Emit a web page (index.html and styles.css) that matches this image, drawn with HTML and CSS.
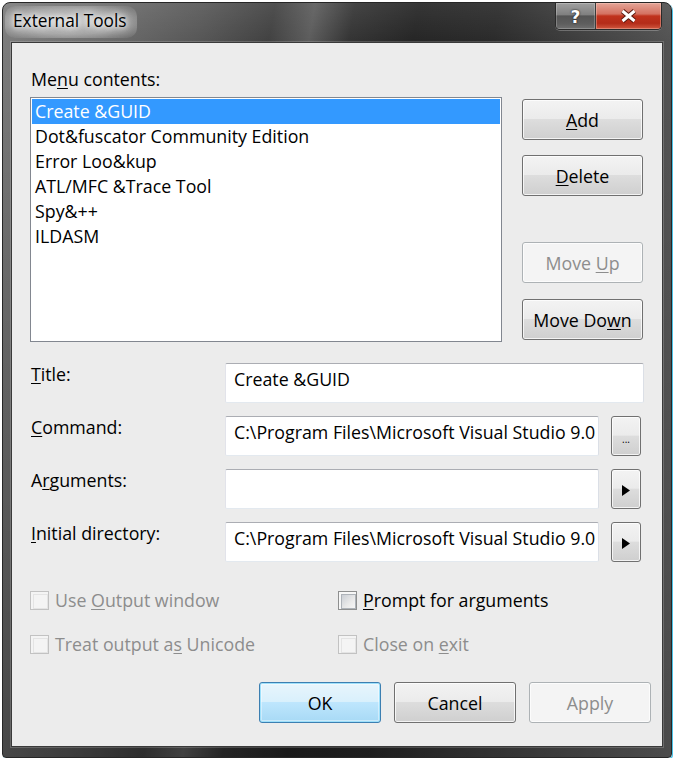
FILE: index.html
```html
<!DOCTYPE html>
<html>
<head>
<meta charset="utf-8">
<link rel="stylesheet" href="styles.css">
</head>
<body>
<div class="window">
  <div class="titlebar">
    <span class="title">External Tools</span>
    <div class="caption-btns">
      <div class="cbtn help"><span class="q">?</span></div>
      <div class="cbtn close">
        <svg width="17" height="14" viewBox="0 0 17 14">
          <path d="M2.5 2 L14.5 12 M14.5 2 L2.5 12" stroke="#5a1a10" stroke-width="5" fill="none"/>
          <path d="M2.5 2 L14.5 12 M14.5 2 L2.5 12" stroke="#ffffff" stroke-width="3" fill="none"/>
        </svg>
      </div>
    </div>
  </div>
  <div class="client">
    <div class="menu-lbl">Me<u>n</u>u contents:</div>
    <div class="top">
      <div class="list">
        <div class="item sel">Create &amp;GUID</div>
        <div class="item">Dot&amp;fuscator Community Edition</div>
        <div class="item">Error Loo&amp;kup</div>
        <div class="item">ATL/MFC &amp;Trace Tool</div>
        <div class="item">Spy&amp;++</div>
        <div class="item">ILDASM</div>
      </div>
      <div class="side">
        <div class="btn add"><span><u>A</u>dd</span></div>
        <div class="btn del"><span><u>D</u>elete</span></div>
        <div class="btn dis up"><span>Move <u>U</u>p</span></div>
        <div class="btn down"><span>Move Do<u>w</u>n</span></div>
      </div>
    </div>
    <div class="fields">
      <div class="flabel"><u>T</u>itle:</div>
      <div class="field wide">Create &amp;GUID</div>

      <div class="flabel"><u>C</u>ommand:</div>
      <div class="field">C:\Program Files\Microsoft Visual Studio 9.0</div>
      <div class="btn small dots"><span>...</span></div>

      <div class="flabel">A<u>r</u>guments:</div>
      <div class="field"></div>
      <div class="btn small"><svg width="8" height="11" viewBox="0 0 8 11"><polygon points="0,0 8,5.5 0,11" fill="#000"/></svg></div>

      <div class="flabel"><u>I</u>nitial directory:</div>
      <div class="field">C:\Program Files\Microsoft Visual Studio 9.0</div>
      <div class="btn small"><svg width="8" height="11" viewBox="0 0 8 11"><polygon points="0,0 8,5.5 0,11" fill="#000"/></svg></div>
    </div>
    <div class="checks">
      <div class="check disabled"><span class="box"></span><span>Use <u>O</u>utput window</span></div>
      <div class="check"><span class="box"></span><span><u>P</u>rompt for arguments</span></div>
      <div class="check disabled"><span class="box"></span><span>Treat output a<u>s</u> Unicode</span></div>
      <div class="check disabled"><span class="box"></span><span>Close on <u>e</u>xit</span></div>
    </div>
    <div class="actions">
      <div class="btn big default"><span>OK</span></div>
      <div class="btn big"><span>Cancel</span></div>
      <div class="btn big dis"><span>Apply</span></div>
    </div>
  </div>
</div>
</body>
</html>
```
FILE: styles.css
```css
* { box-sizing: border-box; }
body {
  margin: 0;
  background: #ffffff;
  font-family: "Open Sans", "Noto Sans", sans-serif;
  font-size: 17.8px;
  color: #000;
}
u { text-decoration-thickness: 1px; text-underline-offset: 2px; }

.window {
  margin: 2px 0 0 2px;
  width: 670px;
  height: 756px;
  border: 1px solid #262626;
  border-radius: 8px 8px 4px 4px;
  padding: 0 8px 10px;
  display: flex;
  flex-direction: column;
  box-shadow: 1px 1px 0 #4cc3e8;
  background:
    linear-gradient(to bottom, rgba(255,255,255,0.08) 0, rgba(0,0,0,0) 40px, rgba(0,0,0,0.3) 100%),
    linear-gradient(100deg, #7c7c7c 0%, #6e6e6e 12%, #575757 25%, #414141 34%, #5c5c5c 39%, #343434 44%, #252525 52%, #2a2a2a 62%, #3d3d3d 72%, #545454 85%, #6c6c6c 100%);
}

.titlebar {
  height: 39px;
  display: flex;
  align-items: flex-start;
  justify-content: space-between;
}
.title {
  margin: 3px 0 0 -6px;
  padding: 4px 10px 6px 8px;
  line-height: 22px;
  font-size: 17.3px;
  color: #000;
  border-radius: 10px;
  background: radial-gradient(ellipse at center, rgba(255,255,255,0.55) 0%, rgba(255,255,255,0.35) 55%, rgba(255,255,255,0) 100%);
  text-shadow: 0 0 5px #fff, 0 0 9px #fff, 0 0 14px rgba(255,255,255,0.9);
}
.caption-btns {
  display: flex;
  margin-right: 1px;
  height: 27px;
  border: 1px solid #2a2a2a;
  border-top: none;
  border-radius: 0 0 5px 5px;
  overflow: hidden;
  box-shadow: 0 1px 0 rgba(255,255,255,0.25);
}
.cbtn {
  display: flex;
  align-items: center;
  justify-content: center;
}
.cbtn.help {
  width: 40px;
  border-right: 1px solid #3a3a3a;
  background: linear-gradient(#a0a0a0 0%, #808080 45%, #555555 50%, #5e5e5e 80%, #707070 100%);
  box-shadow: inset 0 0 0 1px rgba(255,255,255,0.22);
}
.cbtn.help .q {
  font-family: "DejaVu Sans", sans-serif;
  font-weight: bold;
  font-size: 17px;
  color: #fff;
  text-shadow: 0 0 1px #222, 0 0 2px #222;
  margin-top: 1px;
}
.cbtn.close {
  width: 65px;
  background: linear-gradient(#e4a497 0%, #d47261 42%, #c0331d 50%, #b42c19 78%, #d0583f 100%);
  box-shadow: inset 0 0 0 1px rgba(255,220,210,0.35);
}

.client {
  flex: 1;
  background: #ececec;
  border: 1px solid #3a3a3a;
  box-shadow: 0 0 0 1px rgba(255,255,255,0.18);
  padding: 25px 11px 0 18px;
  display: flex;
  flex-direction: column;
}
.menu-lbl { margin-left: 1px; line-height: 22px; }

.top { display: flex; gap: 20px; margin-top: 7px; }
.list {
  width: 472px;
  height: 245px;
  border: 1px solid #828790;
  background: #fff;
  padding: 1px;
}
.item {
  height: 25px;
  line-height: 25px;
  padding-left: 3px;
  white-space: nowrap;
}
.item.sel { background: #3399ff; color: #fff; }

.side {
  width: 121px;
  display: flex;
  flex-direction: column;
  padding-top: 2px;
}
.btn {
  height: 41px;
  display: flex;
  align-items: center;
  justify-content: center;
  border: 1px solid #707070;
  border-radius: 3px;
  background: linear-gradient(#f3f3f3 0%, #ebebeb 48%, #dddddd 50%, #cfcfcf 100%);
  box-shadow: inset 0 0 0 1px rgba(255,255,255,0.75);
  color: #000;
  line-height: 22px;
}
.btn.dis {
  border-color: #adb2b5;
  background: #f4f4f4;
  color: #8d8d8d;
}
.del { margin-top: 15px; }
.up { margin-top: 46px; }
.down { margin-top: 16px; }

.fields {
  display: grid;
  grid-template-columns: 183px 374px 30px;
  grid-auto-rows: 40px;
  column-gap: 12px;
  row-gap: 13px;
  margin-top: 21px;
}
.flabel { line-height: 22px; padding-left: 1px; grid-column: 1; white-space: nowrap; }
.field {
  grid-column: 2;
  border: 1px solid;
  border-color: #abadb3 #dbdfe6 #e3e9ef #e2e3ea;
  border-radius: 2px;
  background: #fff;
  padding: 4px 8px 0;
  line-height: 22px;
  white-space: nowrap;
  overflow: hidden;
}
.field.wide { grid-column: 2 / 4; margin-right: -3px; }
.btn.small { height: 40px; grid-column: 3; padding-top: 3px; }
.btn.dots { align-items: flex-end; padding-bottom: 11px; }
.btn.dots span { font-size: 10px; line-height: 10px; letter-spacing: 0; }

.checks {
  display: grid;
  grid-template-columns: 308px auto;
  grid-auto-rows: 22px;
  row-gap: 22px;
  margin-top: 27px;
}
.check {
  display: flex;
  align-items: center;
  gap: 6px;
  line-height: 22px;
  white-space: nowrap;
}
.box {
  width: 19px;
  height: 19px;
  border: 1px solid #8e8f8f;
  padding: 2px;
  background: #f7f7f7;
  display: block;
  flex: none;
}
.box::after {
  content: "";
  display: block;
  width: 100%;
  height: 100%;
  border: 1px solid #aeb3b9;
  background: linear-gradient(135deg, #cbcfd5 0%, #eaeaea 60%, #f6f6f6 100%);
}
.check.disabled { color: #8d8d8d; }
.check.disabled .box { border-color: #c2c2c2; background: #f4f4f4; }
.check.disabled .box::after { border-color: #e4e4e4; background: #f4f4f4; }

.actions {
  display: flex;
  justify-content: flex-end;
  gap: 13px;
  margin-top: 27px;
}
.btn.big { width: 122px; height: 41px; }
.btn.default {
  border-color: #3c7fb1;
  background: linear-gradient(#e8f5fc 0%, #d9f0fc 48%, #bee6fd 50%, #a7d9f5 100%);
  box-shadow: inset 0 0 0 1px #9ee0fb, inset 0 0 0 2px rgba(255,255,255,0.4);
}
```
